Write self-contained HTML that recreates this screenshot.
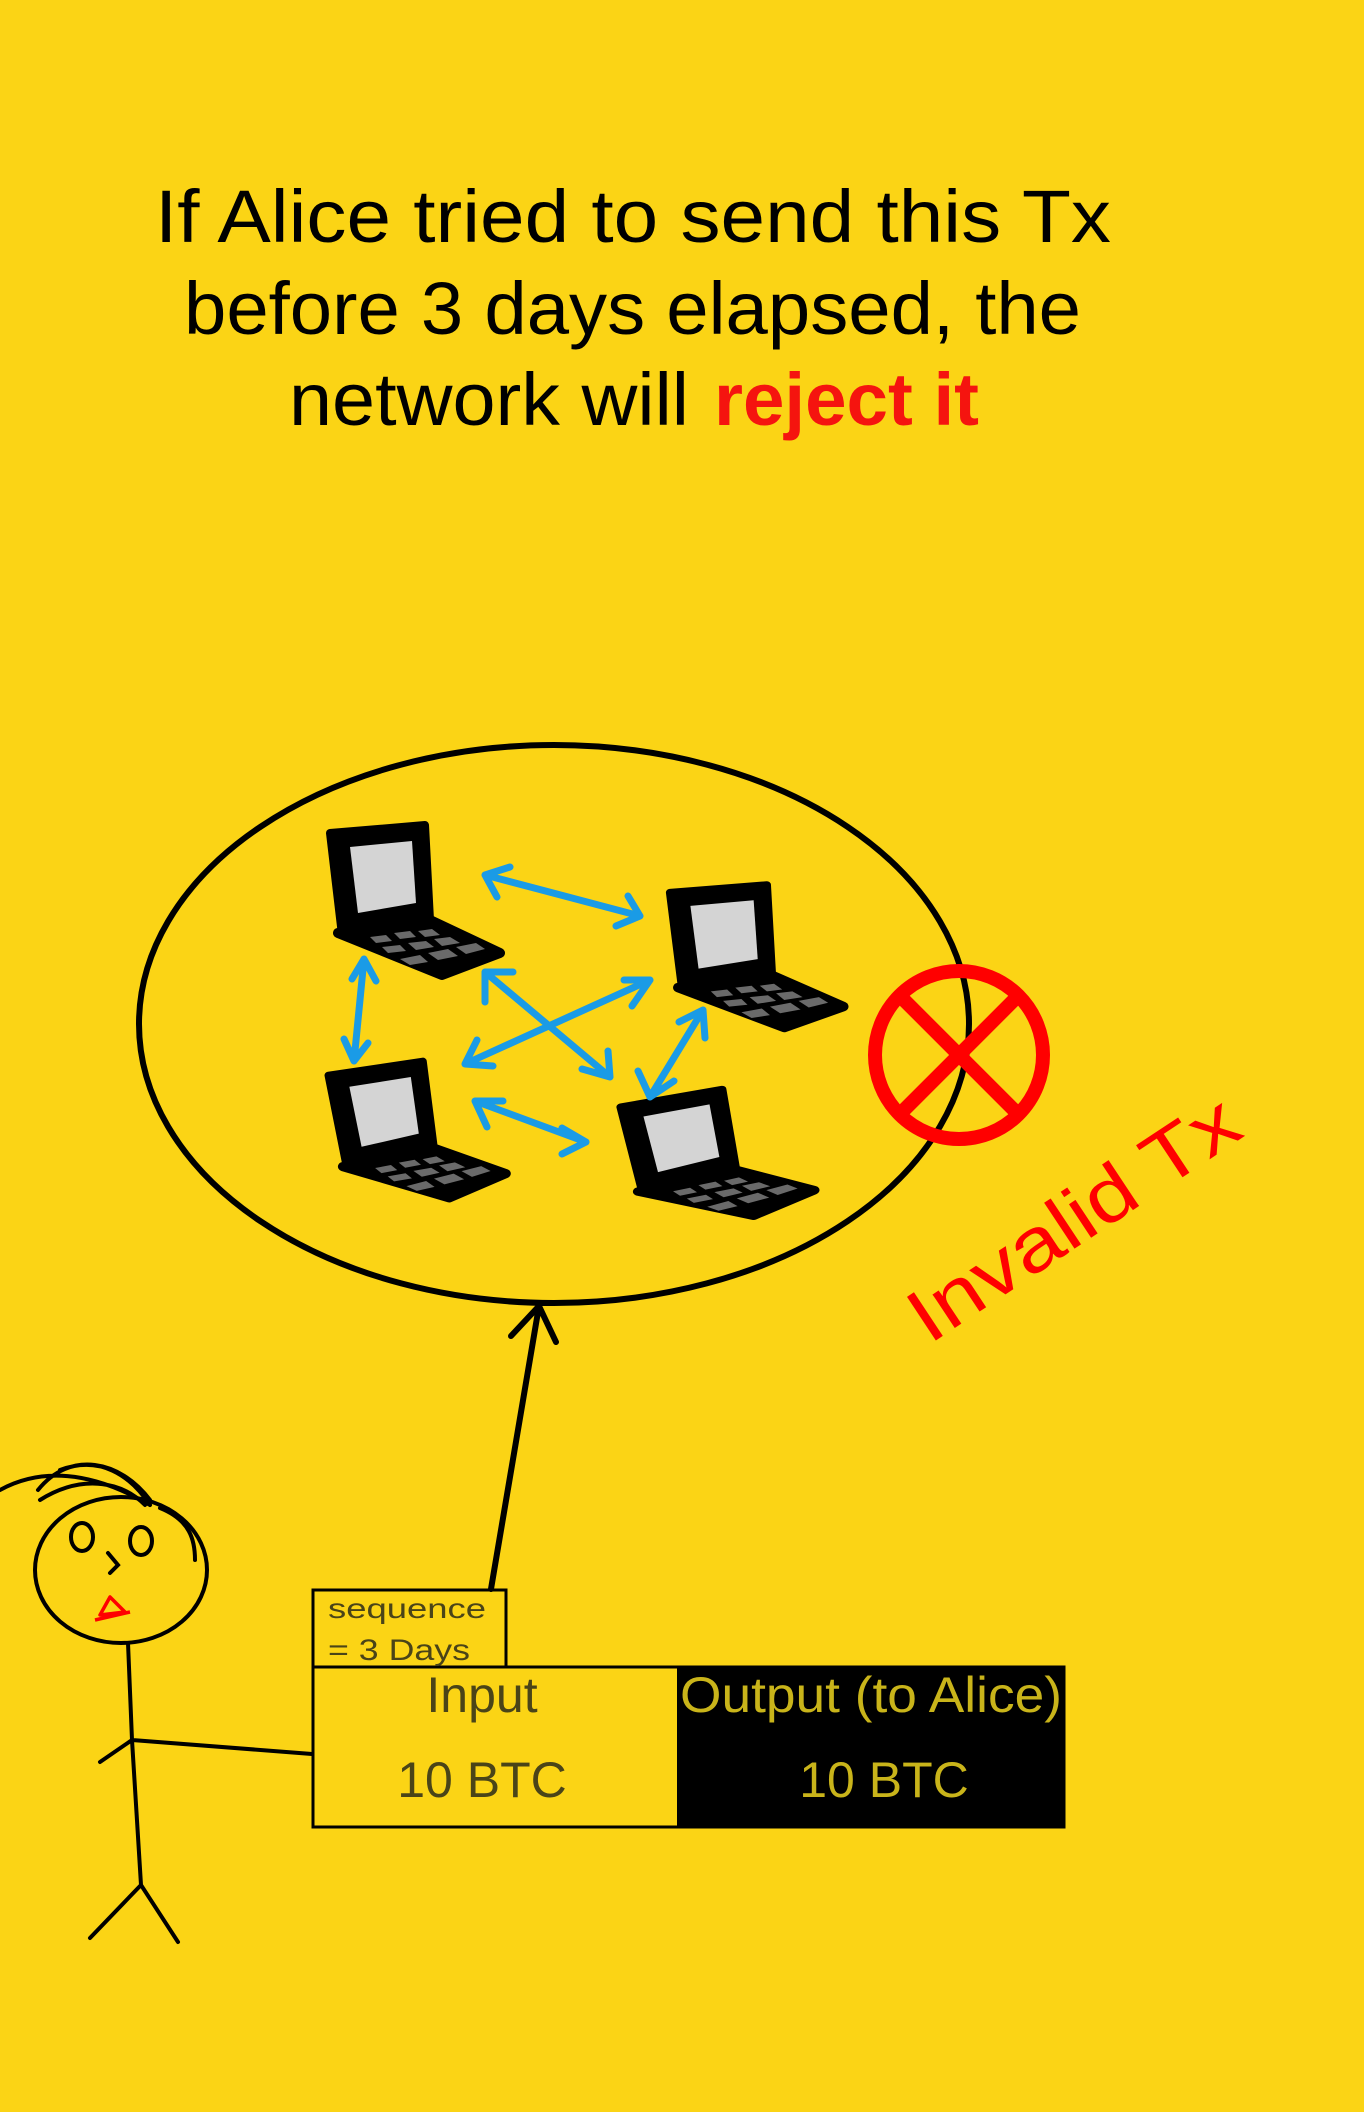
<!DOCTYPE html>
<html><head><meta charset="utf-8"><style>
html,body{margin:0;padding:0;background:#fbd415;}
svg{display:block}
</style></head><body>
<svg width="1364" height="2112" viewBox="0 0 1364 2112" xmlns="http://www.w3.org/2000/svg">
<rect width="1364" height="2112" fill="#fbd415"/>
<defs>
<g id="lap">
  <!-- lid -->
  <path d="M0,8 L95,0 L100,95 L12,110 Z" fill="#000" stroke="#000" stroke-width="8" stroke-linejoin="round"/>
  <path d="M20,22 L82,16 L86,78 L28,88 Z" fill="#d4d4d4"/>
  <!-- base -->
  <path d="M8,108 L100,95 L170,128 L112,150 Z" fill="#000" stroke="#000" stroke-width="10" stroke-linejoin="round"/>
  <g fill="#6a6a6a">
    <path d="M40,112 L56,110 L62,116 L46,118Z"/><path d="M64,108 L80,106 L86,112 L70,114Z"/>
    <path d="M88,106 L102,104 L110,110 L95,112Z"/><path d="M52,122 L70,120 L76,126 L58,128Z"/>
    <path d="M78,118 L96,116 L104,122 L86,125Z"/><path d="M104,114 L120,112 L130,118 L112,121Z"/>
    <path d="M70,134 L90,130 L98,137 L80,140Z"/><path d="M98,128 L118,124 L128,131 L108,135Z"/>
    <path d="M126,122 L146,118 L155,124 L136,129Z"/>
  </g>
</g>
<g id="hd"><path d="M0,0 l-14,-18 M0,0 l-22,4" stroke="#1a9be6" stroke-width="7" fill="none" stroke-linecap="round"/></g>
</defs>

<g font-family="Liberation Sans, sans-serif" font-size="74" fill="#000">
<text x="155" y="242" textLength="956" lengthAdjust="spacingAndGlyphs">If Alice tried to send this Tx</text>
<text x="184" y="334" textLength="897" lengthAdjust="spacingAndGlyphs">before 3 days elapsed, the</text>
<text x="289" y="425" textLength="400" lengthAdjust="spacingAndGlyphs">network will</text>
<text x="714" y="425" fill="#f5140f" font-weight="bold" textLength="265" lengthAdjust="spacingAndGlyphs">reject it</text>
</g>

<ellipse cx="554" cy="1024" rx="415" ry="279" fill="none" stroke="#000" stroke-width="6"/>

<use href="#lap" transform="translate(330,825)"/>
<use href="#lap" transform="translate(670,885) scale(1.02,0.95)"/>
<use href="#lap" transform="translate(328,1068) rotate(-4) scale(1,0.92)"/>
<use href="#lap" transform="translate(620,1100) rotate(-6) scale(1.08,0.86)"/>

<g stroke="#1a9be6" stroke-width="7" fill="none" stroke-linecap="round" stroke-linejoin="round">
  <path d="M485,875 L640,916 M485,875 l12,22 M485,875 l25,-8 M640,916 l-12,-20 M640,916 l-24,10"/>
  <path d="M364,959 L354,1061 M364,959 l-12,20 M364,959 l12,22 M354,1061 l-10,-22 M354,1061 l14,-18"/>
  <path d="M485,972 L610,1077 M485,972 l0,30 M485,972 l28,0 M610,1077 l-2,-26 M610,1077 l-28,-8"/>
  <path d="M650,980 L465,1064 M650,980 l-26,0 M650,980 l-18,26 M465,1064 l12,-24 M465,1064 l28,2"/>
  <path d="M475,1101 L586,1142 M475,1101 l28,0 M475,1101 l12,26 M586,1142 l-24,-14 M586,1142 l-24,12"/>
  <path d="M703,1010 L650,1097 M703,1010 l-24,12 M703,1010 l2,28 M650,1097 l-12,-26 M650,1097 l24,-16"/>
</g>

<circle cx="959" cy="1055" r="84" fill="none" stroke="#f00" stroke-width="14"/>
<path d="M901,997 L1017,1113 M1017,997 L901,1113" stroke="#f00" stroke-width="14"/>

<text x="0" y="0" font-family="Liberation Sans, sans-serif" font-size="76" fill="#f00" transform="translate(929,1345) rotate(-33.5)" textLength="380" lengthAdjust="spacingAndGlyphs">Invalid Tx</text>

<!-- arrow to network -->
<path d="M491,1589 L539,1306 M539,1306 l-28,30 M539,1306 l17,36" stroke="#000" stroke-width="6" fill="none" stroke-linecap="round"/>

<!-- tx box -->
<rect x="313" y="1590" width="193" height="77" fill="none" stroke="#000" stroke-width="3"/>
<rect x="677" y="1667" width="387" height="160" fill="#000"/>
<rect x="313" y="1667" width="751" height="160" fill="none" stroke="#000" stroke-width="3"/>
<g font-family="Liberation Sans, sans-serif" fill="#4a4418">
<text x="328" y="1618" font-size="28" textLength="158" lengthAdjust="spacingAndGlyphs">sequence</text>
<text x="328" y="1660" font-size="30" textLength="142" lengthAdjust="spacingAndGlyphs">= 3 Days</text>
<text x="482" y="1712" font-size="50" text-anchor="middle">Input</text>
<text x="482" y="1797" font-size="50" text-anchor="middle">10 BTC</text>
</g>
<g font-family="Liberation Sans, sans-serif" fill="#c9b41a" font-size="50">
<text x="680" y="1712" textLength="382" lengthAdjust="spacingAndGlyphs">Output (to Alice)</text>
<text x="884" y="1797" text-anchor="middle">10 BTC</text>
</g>

<!-- stick figure -->
<g stroke="#000" stroke-width="4" fill="none" stroke-linecap="round">
  <ellipse cx="121" cy="1570" rx="86" ry="73"/>
  <path d="M0,1490 C40,1468 90,1470 150,1505 M38,1490 C70,1450 120,1460 150,1500 M60,1470 C100,1455 130,1475 150,1505 M40,1500 C80,1475 120,1480 145,1505 M160,1508 C190,1520 195,1540 195,1560"/>
  <ellipse cx="82" cy="1537" rx="11" ry="14"/>
  <ellipse cx="141" cy="1541" rx="11" ry="14"/>
  <path d="M108,1553 l10,12 l-8,8"/>
  <path d="M128,1643 L132,1740 L141,1885 M141,1885 L90,1938 M141,1885 L178,1942 M132,1740 L312,1754 M132,1740 L100,1762"/>
</g>
<path d="M110,1597 L100,1615 L125,1612 Z M95,1620 L130,1612" stroke="#f00" stroke-width="3.5" fill="none" stroke-linejoin="round"/>
</svg>
</body></html>
